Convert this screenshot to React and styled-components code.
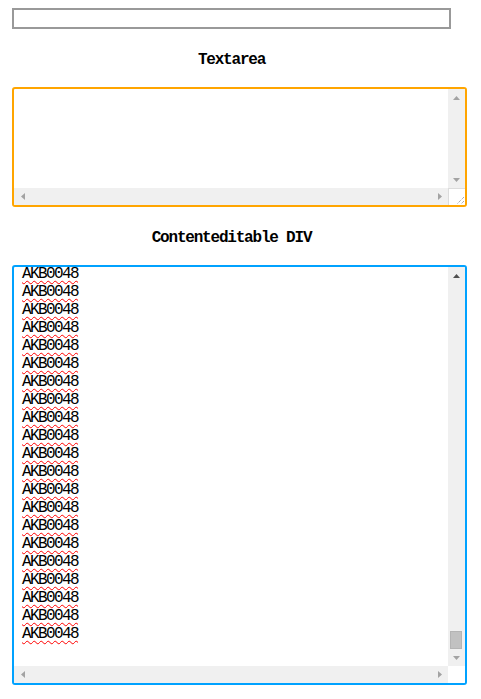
import React from "react";
import styled, { createGlobalStyle } from "styled-components";

const GlobalStyle = createGlobalStyle`
  body {
    margin: 0;
    background: #fff;
  }
`;

const Page = styled.div`
  padding: 8px 12px;
  font-family: "Liberation Mono", monospace;
`;

const TextInput = styled.input`
  display: block;
  box-sizing: border-box;
  width: 439px;
  height: 21px;
  margin: 0;
  border: 2px solid #999;
  outline: none;
  background: #fff;
`;

const Heading = styled.h3`
  width: 439px;
  margin: 22px 0 18px;
  text-align: center;
  font-family: "Liberation Mono", monospace;
  font-size: 16px;
  font-weight: bold;
  line-height: 18px;
  letter-spacing: -1.2px;
  color: #000;
`;

const Frame = styled.div`
  box-sizing: border-box;
  display: grid;
  grid-template-columns: 1fr 17px;
  grid-template-rows: 1fr 17px;
  width: 455px;
  height: ${(p) => p.$height}px;
  border: 2px solid ${(p) => p.$color};
  border-radius: 3px;
  overflow: hidden;
  background: #fff;
`;

const Content = styled.div`
  overflow: hidden;
  padding: 0 8px;
`;

const Lines = styled.div`
  margin-top: -2px;
`;

const Line = styled.div`
  font-family: "Liberation Mono", monospace;
  font-size: 16px;
  line-height: 18px;
  letter-spacing: -1.6px;
  color: #000;

  span {
    text-decoration: underline wavy #f00;
    text-decoration-thickness: 1px;
    text-underline-offset: 2px;
  }
`;

const VScroll = styled.div`
  display: flex;
  flex-direction: column;
  background: #f0f0f0;
`;

const HScroll = styled.div`
  display: flex;
  justify-content: space-between;
  background: #f0f0f0;
`;

const ScrollButton = styled.div`
  display: flex;
  align-items: center;
  justify-content: center;
  width: 17px;
  height: 17px;
  flex: none;
`;

const Track = styled.div`
  flex: 1;
`;

const Thumb = styled.div`
  box-sizing: border-box;
  width: 12px;
  height: 18px;
  margin: auto 0 0 2px;
  background: #c1c1c1;
  border: 1px solid #b4b4b4;
`;

const Corner = styled.div`
  box-sizing: border-box;
  display: flex;
  align-items: flex-end;
  justify-content: flex-end;
  background: #fff;
  border-top: ${(p) => (p.$grip ? "1px solid #dcdcdc" : "none")};
  border-left: ${(p) => (p.$grip ? "1px solid #dcdcdc" : "none")};
`;

const Arrow = ({ dir, color = "#a3a3a3" }) => {
  const pts = {
    up: "0,4 7,4 3.5,0",
    down: "0,0 7,0 3.5,4",
    left: "4,0 4,7 0,3.5",
    right: "0,0 0,7 4,3.5",
  }[dir];
  const vertical = dir === "up" || dir === "down";
  return (
    <svg width={vertical ? 7 : 4} height={vertical ? 4 : 7}>
      <polygon points={pts} fill={color} />
    </svg>
  );
};

const Grip = () => (
  <svg width="10" height="10">
    <line x1="9" y1="2" x2="2" y2="9" stroke="#888" strokeDasharray="1 1" />
    <line x1="9" y1="6" x2="6" y2="9" stroke="#888" strokeDasharray="1 1" />
  </svg>
);

const words = Array.from({ length: 21 }, () => "AKB0048");

const App = () => {
  return (
    <Page>
      <GlobalStyle />
      <TextInput type="text" />

      <Heading>Textarea</Heading>
      <Frame $color="#ffa500" $height={120}>
        <Content />
        <VScroll>
          <ScrollButton>
            <Arrow dir="up" />
          </ScrollButton>
          <Track />
          <ScrollButton>
            <Arrow dir="down" />
          </ScrollButton>
        </VScroll>
        <HScroll>
          <ScrollButton>
            <Arrow dir="left" />
          </ScrollButton>
          <ScrollButton>
            <Arrow dir="right" />
          </ScrollButton>
        </HScroll>
        <Corner $grip>
          <Grip />
        </Corner>
      </Frame>

      <Heading>Contenteditable DIV</Heading>
      <Frame $color="#00a2ff" $height={420}>
        <Content>
          <Lines>
            {words.map((w, i) => (
              <Line key={i}>
                <span>{w}</span>
              </Line>
            ))}
          </Lines>
        </Content>
        <VScroll>
          <ScrollButton>
            <Arrow dir="up" color="#505050" />
          </ScrollButton>
          <Thumb />
          <ScrollButton>
            <Arrow dir="down" />
          </ScrollButton>
        </VScroll>
        <HScroll>
          <ScrollButton>
            <Arrow dir="left" />
          </ScrollButton>
          <ScrollButton>
            <Arrow dir="right" />
          </ScrollButton>
        </HScroll>
        <Corner />
      </Frame>
    </Page>
  );
};

export default App;
